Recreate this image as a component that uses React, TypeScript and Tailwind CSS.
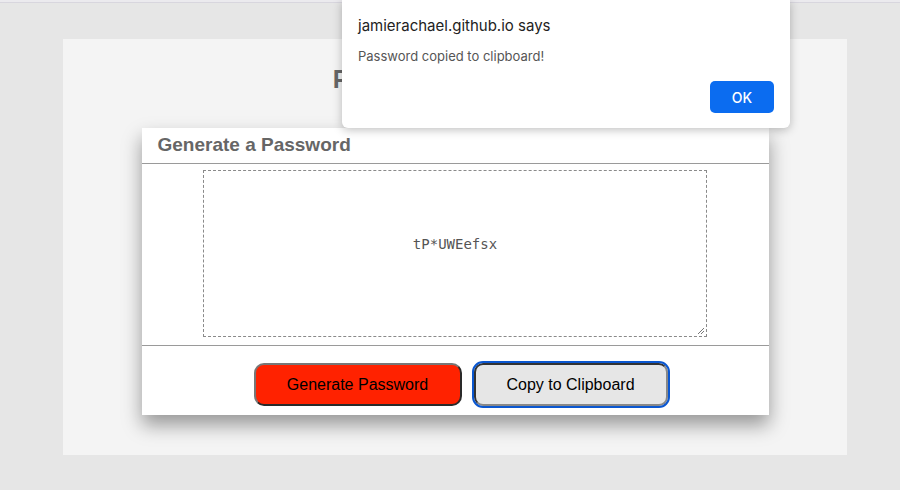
export default function App() {
  return (
    <div className="relative w-[900px] h-[490px] overflow-hidden bg-[#e6e6e6] font-['Liberation_Sans',Arial,sans-serif]">
      <div className="h-[3px] bg-[#ebeaee] border-b border-[#d8d6de]" />

      <div className="ml-[63px] mt-[36px] w-[784px] h-[416px] bg-[#f4f4f4] pt-[22px]">
        <h1 className="text-center text-[25px] font-bold text-[#666] leading-[36px]">
          Password Generator
        </h1>

        <div className="mx-auto mt-[31px] w-[627px] bg-white shadow-[0_10px_18px_rgba(0,0,0,0.38)]">
          <div className="h-[36px] border-b border-[#9a9a9a] px-4 flex items-center">
            <h2 className="text-[19px] font-bold text-[#666]">Generate a Password</h2>
          </div>

          <div className="pt-[6px] pb-[8px] flex justify-center">
            <div className="relative w-[504px] h-[167px] border border-dashed border-[#8a8a8a] flex items-center justify-center">
              <span className="font-['DejaVu_Sans_Mono',monospace] text-[14px] text-[#555] -mt-[18px]">
                tP*UWEefsx
              </span>
              <svg className="absolute right-[1px] bottom-[1px]" width="8" height="8" viewBox="0 0 8 8">
                <path d="M7 1 L1 7 M7 4 L4 7" stroke="#777" strokeWidth="1" />
              </svg>
            </div>
          </div>

          <div className="border-t border-[#9a9a9a] pt-[17px] pb-[9px] flex justify-center gap-[12px] pl-[11px]">
            <button className="w-[208px] h-[43px] rounded-[10px] bg-[#ff2200] border-2 border-t-[#777] border-l-[#777] border-r-[#2a2a2a] border-b-[#2a2a2a] text-[16px] text-black">
              Generate Password
            </button>
            <button className="w-[194px] h-[43px] rounded-[9px] bg-[#e6e6e6] outline-2 outline-[#0b57d0] border-2 border-t-[#333] border-l-[#333] border-r-[#888] border-b-[#888] text-[16px] text-black">
              Copy to Clipboard
            </button>
          </div>
        </div>
      </div>

      <div className="absolute left-[342px] top-0 w-[448px] h-[128px] bg-white rounded-b-[6px] shadow-[0_2px_10px_rgba(0,0,0,0.25)] font-['Inter',sans-serif]">
        <div className="pl-[16px] pt-[16px] text-[15px] text-[#222] leading-[20px]">
          jamierachael.github.io says
        </div>
        <div className="pl-[16px] pt-[12px] text-[13px] text-[#555] leading-[16px]">
          Password copied to clipboard!
        </div>
        <div className="flex justify-end pr-[16px] pt-[17px]">
          <button className="w-[64px] h-[32px] rounded-[5px] bg-[#0b6cf0] text-white text-[14px] font-medium">
            OK
          </button>
        </div>
      </div>
    </div>
  );
}
